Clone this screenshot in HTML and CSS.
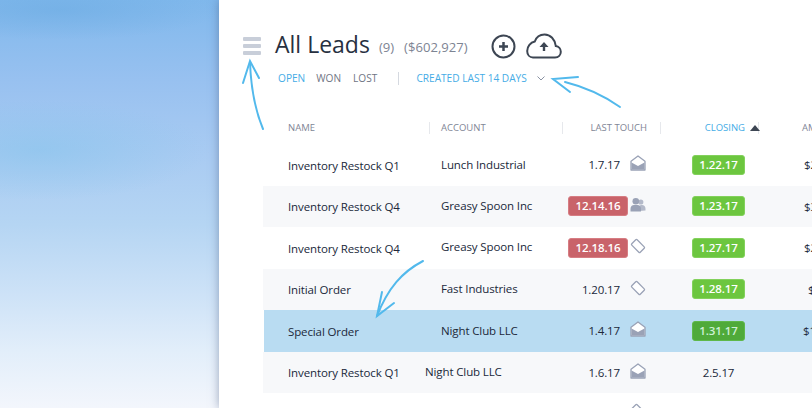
FILE: index.html
```html
<!DOCTYPE html>
<html lang="en">
<head>
  <meta charset="UTF-8">
  <title>All Leads</title>
  <link rel="stylesheet" href="styles.css">
</head>
<body>

<svg class="defs" width="0" height="0">
  <symbol id="mail" viewBox="0 0 16 16">
    <path d="M1 6.2 8 1l7 5.2V15H1z" fill="#fff" stroke="#9aa2b6" stroke-width="1.3" stroke-linejoin="round"/>
    <path d="M1.5 7.5 8 11l6.5-3.5V14.5h-13z" fill="#9aa2b6"/>
  </symbol>
  <symbol id="people" viewBox="0 0 16 16">
    <circle cx="10.8" cy="5" r="2.6" fill="#b3b9c9"/>
    <path d="M9 14V10.500c0-1.500 1-2.500 2-2.500h1c2 0 3.500 1.500 3.500 4v1.500z" fill="#b3b9c9"/>
    <circle cx="5.800" cy="4.300" r="3.300" fill="#9aa2b6"/>
    <path d="M.5 14.500v-2.500c0-2.500 1.500-4 3.500-4h3.500c2 0 3.500 1.500 3.500 4v2.500z" fill="#9aa2b6"/>
  </symbol>
  <symbol id="tag" viewBox="0 0 16 16">
    <rect x="4.200" y="2" width="7.600" height="12" rx="1" transform="rotate(-45 8 8)" fill="#fff" stroke="#9aa2b6" stroke-width="1.300"/>
  </symbol>
</svg>

<div class="sky"></div>

<main class="panel">
  <header class="head">
    <div class="burger"><span></span><span></span><span></span></div>
    <h1 class="title">All Leads</h1>
    <span class="count">(9)</span>
    <span class="total">($602,927)</span>
    <svg class="plus" width="25" height="25" viewBox="0 0 25 25">
      <circle cx="12.500" cy="12.500" r="11" fill="none" stroke="#3d4653" stroke-width="2"/>
      <path d="M12.500 8v9M8 12.500h9" stroke="#3d4653" stroke-width="2.500"/>
    </svg>
    <svg class="cloud" width="36" height="26" viewBox="0 0 36 26">
      <path d="M7 24.500h22c3.500 0 5.800-2.600 5.800-5.800 0-3-2.200-5.400-5-5.700C29 6.500 24.500 1.500 18.500 1.500c-4.800 0-8.300 3-9.700 7C4.500 9.500 1.200 13.500 1.200 18c0 3.800 2.500 6.500 5.800 6.500z" fill="none" stroke="#3d4653" stroke-width="2"/>
      <path d="M18 18v-5" stroke="#3d4653" stroke-width="2.400"/>
      <path d="M13.500 14 18 9l4.500 5z" fill="#3d4653"/>
    </svg>
  </header>

  <nav class="filters">
    <a class="on">Open</a>
    <a class="won">Won</a>
    <a class="lost">Lost</a>
    <i class="sep"></i>
    <a class="on range">Created last 14 days</a>
    <svg class="chev" width="8" height="5" viewBox="0 0 8 5"><path d="M.5.500 4 4 7.500.500" fill="none" stroke="#8a92a3"/></svg>
  </nav>

  <div class="thead">
    <div class="th th-name">Name</div>
    <div class="th th-account">Account</div>
    <div class="th th-touch">Last touch</div>
    <div class="th th-closing"><span class="on">Closing</span><i class="caret"></i></div>
    <div class="th th-amount">Amount</div>
  </div>

  <div class="row">
    <div class="name">Inventory Restock Q1</div>
    <div class="acct first">Lunch Industrial</div>
    <div class="touch"><span class="date">1.7.17</span></div>
    <svg class="ico"><use href="#mail"/></svg>
    <div class="closing"><span class="badge">1.22.17</span></div>
    <div class="amt">$24,500</div>
  </div>
  <div class="row alt">
    <div class="name">Inventory Restock Q4</div>
    <div class="acct">Greasy Spoon Inc</div>
    <div class="touch"><span class="late">12.14.16</span></div>
    <svg class="ico"><use href="#people"/></svg>
    <div class="closing"><span class="badge">1.23.17</span></div>
    <div class="amt">$31,000</div>
  </div>
  <div class="row">
    <div class="name">Inventory Restock Q4</div>
    <div class="acct up">Greasy Spoon Inc</div>
    <div class="touch"><span class="late">12.18.16</span></div>
    <svg class="ico"><use href="#tag"/></svg>
    <div class="closing"><span class="badge">1.27.17</span></div>
    <div class="amt">$28,750</div>
  </div>
  <div class="row alt">
    <div class="name">Initial Order</div>
    <div class="acct">Fast Industries</div>
    <div class="touch"><span class="date">1.20.17</span></div>
    <svg class="ico"><use href="#tag"/></svg>
    <div class="closing"><span class="badge">1.28.17</span></div>
    <div class="amt amt-short">$9,200</div>
  </div>
  <div class="row selected">
    <div class="name">Special Order</div>
    <div class="acct">Night Club LLC</div>
    <div class="touch"><span class="date">1.4.17</span></div>
    <svg class="ico"><use href="#mail"/></svg>
    <div class="closing"><span class="badge">1.31.17</span></div>
    <div class="amt amt-long">$125,000</div>
  </div>
  <div class="row alt">
    <div class="name">Inventory Restock Q1</div>
    <div class="acct acct-out">Night Club LLC</div>
    <div class="touch"><span class="date">1.6.17</span></div>
    <svg class="ico"><use href="#mail"/></svg>
    <div class="closing"><span class="plain">2.5.17</span></div>
    <div class="amt amt-off">$800</div>
  </div>
  <div class="row row-cut">
    <div class="name">Inventory Restock Q2</div>
    <div class="acct">Lunch Industrial</div>
    <div class="touch"><span class="date">1.9.17</span></div>
    <svg class="ico"><use href="#tag"/></svg>
    <div class="closing"><span class="plain">2.7.17</span></div>
    <div class="amt">$18,400</div>
  </div>

  <!-- hand drawn notes over the page -->
  <svg class="notes" width="593" height="408" viewBox="219 0 593 408">
    <g fill="none" stroke="#52b9ec" stroke-width="2" stroke-linecap="round">
      <path d="M263 129C256 112 251 92 250 62"/>
      <path d="M243 83 250 61 259 78"/>
      <path d="M620 107C603 95 585 87 565 82"/>
      <path d="M578 77 553 79 570 92"/>
      <path d="M423 261C402 272 388 288 377 316"/>
      <path d="M382 292 377 316 394 303"/>
    </g>
  </svg>
</main>

</body>
</html>
```

FILE: styles.css
```css
* { box-sizing: border-box; }
html, body {
  margin: 0;
  height: 408px;
  overflow: hidden;
}
body {
  display: flex;
  font-family: "Open Sans", sans-serif;
  color: #20283a;
  background: #fff;
}
.defs { position: absolute; }

.sky {
  width: 219px;
  flex: none;
  background:
    radial-gradient(ellipse 170px 50px at 40px 150px, rgba(130,195,235,.5), transparent),
    radial-gradient(ellipse 160px 30px at 60px 10px, rgba(105,170,225,.5), transparent),
    linear-gradient(#80b8ec 0%, #98c1f0 20%, #a9cbf2 38%, #b5d5f3 55%, #cde2f7 72%, #e2eefa 86%, #f3f6fc 100%);
}

.panel {
  position: relative;
  flex: 1;
  min-width: 0;
  height: 408px;
  overflow: hidden;
  background: #fff;
  padding-top: 30px;
  box-shadow: 0 0 9px rgba(70,90,130,.5);
}

/* title line */
.head {
  display: flex;
  align-items: center;
  height: 32px;
  padding-left: 24px;
}
.burger {
  display: flex;
  flex-direction: column;
  gap: 3px;
  width: 18px;
  margin-right: 14px;
}
.burger span {
  height: 4px;
  background: #c8ced9;
  border-radius: 1px;
}
.title {
  margin: 0 0 5px;
  font-size: 23px;
  font-weight: 400;
  color: #27303f;
}
.count, .total {
  font-size: 13.100px;
  color: #7d8493;
  margin-top: 2px;
}
.count { margin-left: 9px; }
.total { margin-left: 10px; }
.plus { margin-left: 23px; flex: none; }
.cloud { margin-left: 10px; flex: none; }

/* filters */
.filters {
  display: flex;
  align-items: center;
  height: 16px;
  margin-top: 8px;
  padding-left: 59px;
  font-size: 10.150px;
  text-transform: uppercase;
}
.filters a { color: #6f7584; }
.filters a.on, .on { color: #45ace6; }
.filters .won { margin-left: 11px; }
.filters .lost { margin-left: 12px; }
.sep {
  width: 1px;
  height: 13px;
  background: #d5d9e0;
  margin-left: 21px;
}
.filters .range { margin-left: 17px; }
.chev { margin-left: 10px; }

/* table */
.thead {
  display: flex;
  height: 12px;
  margin-top: 36px;
  margin-left: 44px;
  margin-bottom: 10px;
  width: 640px;
  font-size: 9.500px;
  line-height: 12px;
  text-transform: uppercase;
  color: #7f8696;
}
.th { flex: none; border-right: 1px solid #e6e8ec; white-space: nowrap; }
.th-name { width: 167px; padding-left: 25px; }
.th-account { width: 133px; padding-left: 11px; }
.th-touch { width: 98px; padding-right: 13px; text-align: right; }
.th-closing {
  width: 98px;
  display: flex;
  justify-content: flex-end;
  align-items: center;
  gap: 5px;
}
.th-amount { border-right: 0; padding-left: 43px; }
.caret {
  width: 0;
  height: 0;
  border-left: 5px solid transparent;
  border-right: 5px solid transparent;
  border-bottom: 6px solid #3d4653;
  margin-right: -2px;
}

.row {
  display: grid;
  grid-template-columns: 153px 119px 68px 18px 99px 139px;
  align-items: center;
  height: 41.500px;
  margin-left: 44px;
  width: 640px;
  padding-left: 25px;
  font-size: 11.500px;
  letter-spacing: -.12px;
  white-space: nowrap;
}
.alt { background: #f7f8fa; }
.selected { background: #b9dcf2; margin-left: 45px; padding-left: 24px; }
.row-cut { height: 50px; }
.row-cut .ico { margin-bottom: 15px; }
.name { margin-top: 1px; }
.acct { margin-bottom: 1px; }
.acct.first { margin-bottom: 0; }
.acct.up { margin-bottom: 3px; }
.acct-out { margin-left: -16px; }
.touch { text-align: right; }
.date { margin-right: 8px; }
.late {
  display: inline-block;
  width: 60px;
  height: 20px;
  line-height: 18px;
  text-align: center;
  font-weight: 600;
  color: #fff;
  background: #c9636a;
  border: 1px solid #d67d83;
  border-radius: 3px;
}
.ico {
  width: 16px;
  height: 16px;
  margin-left: 2px;
  margin-bottom: 3px;
}
.closing { justify-self: end; width: 53px; text-align: center; }
.badge {
  display: block;
  height: 20px;
  line-height: 18px;
  font-weight: 600;
  color: #fff;
  background: #6cc63f;
  border: 1px solid #83d15c;
  border-radius: 3px;
}
.selected .badge {
  background: #4faa3a;
  border-color: #5fb84a;
  color: #cdf0d6;
}
.amt { padding-left: 59px; }
.amt-short { padding-left: 63px; }
.amt-long { padding-left: 58px; }
.amt-off { padding-left: 71px; }

/* arrows drawn by hand on top of the page */
.notes {
  position: absolute;
  left: 0;
  top: 0;
  pointer-events: none;
}
```
